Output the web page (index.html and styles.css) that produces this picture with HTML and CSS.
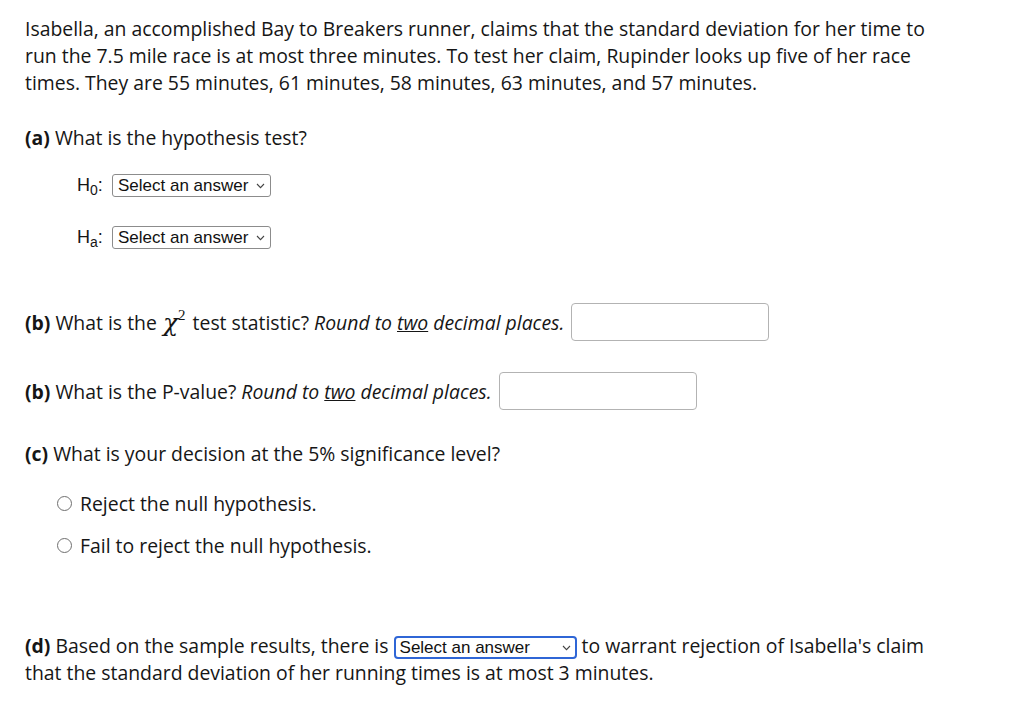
FILE: index.html
```html
<!DOCTYPE html>
<html lang="en">
<head>
<meta charset="utf-8">
<title>Hypothesis test</title>
<link rel="stylesheet" href="styles.css">
</head>
<body>
<div class="page">
  <p class="intro">Isabella, an accomplished Bay to Breakers runner, claims that the standard deviation for her time to run the 7.5 mile race is at most three minutes. To test her claim, Rupinder looks up five of her race times. They are 55 minutes, 61 minutes, 58 minutes, 63 minutes, and 57 minutes.</p>

  <p class="q q-a"><b>(a)</b> What is the hypothesis test?</p>

  <div class="hyp-row hyp-first">
    <span class="hyp-label">H<sub>0</sub>:</span>
    <span class="select">
      <span class="select-text">Select an answer</span>
      <svg class="chev" width="9" height="6" viewBox="0 0 9 6"><path d="M1 1 L4.5 4.6 L8 1" fill="none" stroke="#444" stroke-width="1.1"/></svg>
    </span>
  </div>
  <div class="hyp-row hyp-second">
    <span class="hyp-label">H<sub>a</sub>:</span>
    <span class="select">
      <span class="select-text">Select an answer</span>
      <svg class="chev" width="9" height="6" viewBox="0 0 9 6"><path d="M1 1 L4.5 4.6 L8 1" fill="none" stroke="#444" stroke-width="1.1"/></svg>
    </span>
  </div>

  <div class="q-input q-b1">
    <span><b>(b)</b> What is the <span class="chi">χ<sup>2</sup></span> test statistic? <i>Round to <u>two</u> decimal places.</i></span>
    <span class="answer-box"></span>
  </div>

  <div class="q-input q-b2">
    <span><b>(b)</b> What is the P-value? <i>Round to <u>two</u> decimal places.</i></span>
    <span class="answer-box"></span>
  </div>

  <p class="q q-c"><b>(c)</b> What is your decision at the 5% significance level?</p>

  <div class="radio-row radio-first"><span class="radio"></span><span>Reject the null hypothesis.</span></div>
  <div class="radio-row radio-second"><span class="radio"></span><span>Fail to reject the null hypothesis.</span></div>

  <p class="q q-d"><b>(d)</b> <span>Based on the sample results, there is</span> <span class="select select-focus"><span class="select-text">Select an answer</span><svg class="chev" width="9" height="6" viewBox="0 0 9 6"><path d="M1 1 L4.5 4.6 L8 1" fill="none" stroke="#444" stroke-width="1.1"/></svg></span> <span>to warrant rejection of Isabella's claim</span> <span>that the standard deviation of her running times is at most 3 minutes.</span></p>
</div>
</body>
</html>
```

FILE: styles.css
```css
html, body {
  margin: 0;
  padding: 0;
  background: #ffffff;
}

body {
  font-family: "Open Sans", "Noto Sans", sans-serif;
  font-size: 19.4px;
  line-height: 27px;
  color: #161616;
}

.page {
  width: 928px;
  padding: 15px 0 0 25px;
}

.intro {
  margin: 0;
}

.q {
  margin: 0;
}

.q b, .q-input b {
  font-weight: 700;
}

.q-a {
  margin-top: 28px;
}

.hyp-row {
  display: flex;
  align-items: center;
  height: 27px;
  padding-left: 52px;
}

.hyp-first {
  margin-top: 21px;
}

.hyp-second {
  margin-top: 25px;
}

.hyp-label {
  font-family: "Liberation Sans", Arial, sans-serif;
  font-size: 18px;
  width: 35px;
  flex: none;
}

.hyp-label sub {
  font-size: 14px;
  line-height: 0;
  vertical-align: -4px;
}

.select {
  display: inline-flex;
  align-items: center;
  box-sizing: border-box;
  height: 23px;
  width: 159px;
  padding: 0 5px 0 5px;
  border: 1px solid #8c8c8c;
  border-radius: 3px;
  background: #fff;
  font-family: "Liberation Sans", Arial, sans-serif;
  font-size: 17px;
  line-height: 19px;
  color: #111;
  vertical-align: middle;
}

.select-text {
  flex: 1;
  white-space: nowrap;
}

.chev {
  flex: none;
  margin-top: 1px;
}

.select-focus {
  width: 183px;
  border: 2px solid #2f66d6;
  border-radius: 4px;
  padding: 0 4px 0 4px;
}

.q-input {
  display: flex;
  align-items: center;
  gap: 7px;
  height: 38px;
}

.q-b1 {
  margin-top: 52px;
}

.q-b2 {
  margin-top: 31px;
}

.answer-box {
  display: block;
  box-sizing: border-box;
  width: 198px;
  height: 38px;
  border: 1px solid #b3b3b3;
  border-radius: 4px;
  background: #fff;
}

.chi {
  font-family: "DejaVu Serif", "Liberation Serif", serif;
  font-style: italic;
  font-size: 25px;
  line-height: 0;
  padding: 0 2px 0 1px;
  vertical-align: -1px;
}

.chi sup {
  font-family: "Liberation Serif", serif;
  font-style: normal;
  font-size: 15px;
  line-height: 0;
  vertical-align: 11px;
}

.q-c {
  margin-top: 30px;
}

.radio-row {
  display: flex;
  align-items: center;
  height: 27px;
  padding-left: 32px;
  gap: 8px;
}

.radio-first {
  margin-top: 23px;
}

.radio-second {
  margin-top: 15px;
}

.radio {
  display: block;
  box-sizing: border-box;
  width: 15px;
  height: 15px;
  border: 1px solid #6f6f6f;
  border-radius: 50%;
  background: #fff;
}

.q-d {
  margin-top: 73px;
}
```
